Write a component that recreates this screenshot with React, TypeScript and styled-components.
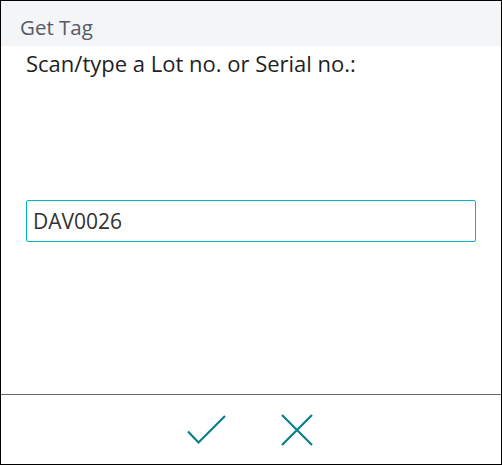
import styled, { createGlobalStyle } from "styled-components";

const GlobalStyle = createGlobalStyle`
    html, body {
        margin: 0;
        padding: 0;
        background: #ffffff;
    }
    body {
        font-family: "Open Sans", "Noto Sans", sans-serif;
    }
`;

const Dialog = styled.div`
    box-sizing: border-box;
    width: 502px;
    height: 465px;
    border: 1px solid #000000;
    display: flex;
    flex-direction: column;
    background: #ffffff;
`;

const Header = styled.div`
    height: 45px;
    background: #f3f5f7;
    box-sizing: border-box;
    padding: 13px 0 0 19px;
    font-size: 20.5px;
    line-height: 1.362;
    color: #535b68;
`;

const Body = styled.div`
    flex: 1;
    display: flex;
    flex-direction: column;
    padding: 2px 25px 0 25px;
`;

const Prompt = styled.div`
    font-size: 22px;
    line-height: 30px;
    color: #1f1f1f;
`;

const Field = styled.input`
    margin-top: 122px;
    box-sizing: border-box;
    width: 450px;
    height: 42px;
    border: 1px solid #00b7c3;
    border-radius: 2px;
    padding: 0 6px;
    font-family: "Open Sans", "Noto Sans", sans-serif;
    font-size: 21px;
    color: #323232;
    outline: none;
`;

const Footer = styled.div`
    height: 69px;
    border-top: 1px solid #6b6b6b;
    display: flex;
    justify-content: center;
    align-items: center;
    gap: 50px;
    padding-left: 1px;
`;

const IconButton = styled.button`
    border: none;
    background: none;
    padding: 0;
    width: 40px;
    height: 32px;
    display: flex;
    align-items: center;
    justify-content: center;
    color: #0a7f8a;
    cursor: pointer;
`;

const App = () => {
    return (
        <>
            <GlobalStyle />
            <Dialog>
                <Header>Get Tag</Header>
                <Body>
                    <Prompt>Scan/type a Lot no. or Serial no.:</Prompt>
                    <Field defaultValue="DAV0026" />
                </Body>
                <Footer>
                    <IconButton aria-label="OK">
                        <svg width="40" height="30" viewBox="0 0 40 30" fill="none">
                            <path d="M1 16.5 L11.5 27.5 L38 1" stroke="currentColor" strokeWidth="2.2" />
                        </svg>
                    </IconButton>
                    <IconButton aria-label="Cancel">
                        <svg width="32" height="32" viewBox="0 0 32 32" fill="none">
                            <path d="M1 1 L31 31 M31 1 L1 31" stroke="currentColor" strokeWidth="2.2" />
                        </svg>
                    </IconButton>
                </Footer>
            </Dialog>
        </>
    );
};

export default App;
